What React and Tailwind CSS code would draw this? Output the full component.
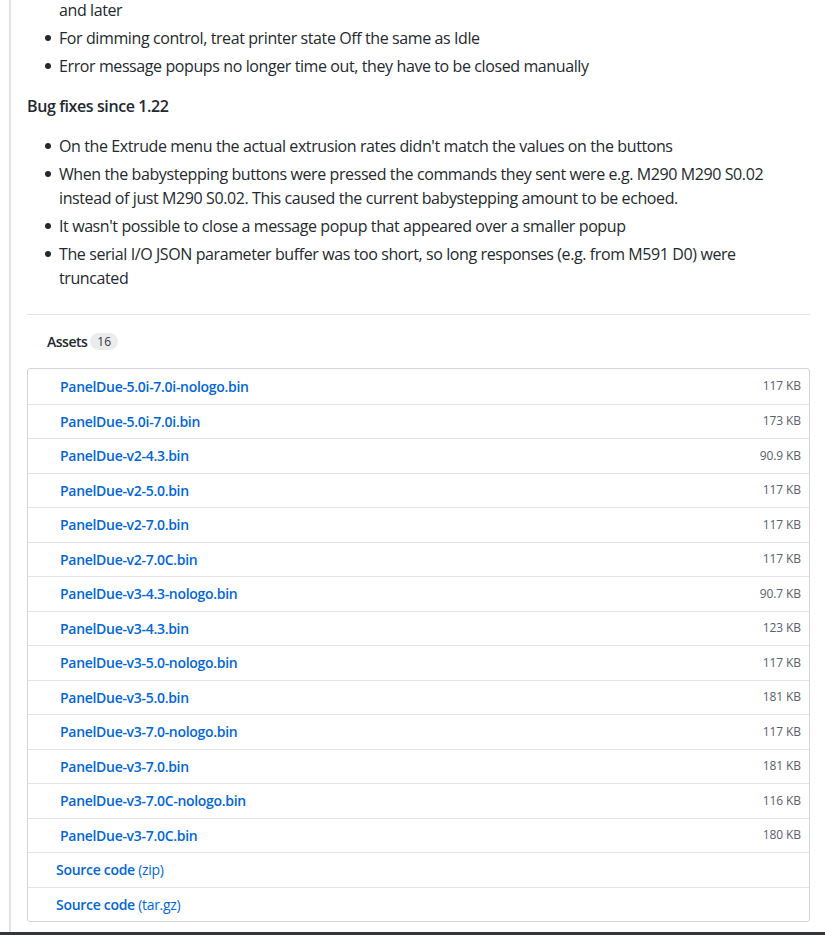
import React from "react";

const bins = [
  ["PanelDue-5.0i-7.0i-nologo.bin", "117 KB"],
  ["PanelDue-5.0i-7.0i.bin", "173 KB"],
  ["PanelDue-v2-4.3.bin", "90.9 KB"],
  ["PanelDue-v2-5.0.bin", "117 KB"],
  ["PanelDue-v2-7.0.bin", "117 KB"],
  ["PanelDue-v2-7.0C.bin", "117 KB"],
  ["PanelDue-v3-4.3-nologo.bin", "90.7 KB"],
  ["PanelDue-v3-4.3.bin", "123 KB"],
  ["PanelDue-v3-5.0-nologo.bin", "117 KB"],
  ["PanelDue-v3-5.0.bin", "181 KB"],
  ["PanelDue-v3-7.0-nologo.bin", "117 KB"],
  ["PanelDue-v3-7.0.bin", "181 KB"],
  ["PanelDue-v3-7.0C-nologo.bin", "116 KB"],
  ["PanelDue-v3-7.0C.bin", "180 KB"],
];

function Li({ children, first }) {
  return (
    <li className={`relative leading-[24px] ${first ? "" : "mt-[4px]"}`}>
      <span className="absolute left-[-14px] top-[9px] w-[6px] h-[6px] rounded-full bg-[#24292e]" />
      {children}
    </li>
  );
}

export default function App() {
  return (
    <div
      className="w-[825px] h-[935px] flex flex-col bg-white overflow-hidden text-[#24292e] text-[16px] tracking-[-0.4px]"
      style={{ fontFamily: '"Open Sans", "Noto Sans", sans-serif' }}
    >
      <div className="flex-1 flex min-h-0">
        <div className="w-[9px]" />
        <div className="w-[2px] bg-[#e1e4e8]" />
        <div className="flex-1 pl-[16px] pr-[15px] mt-[-2px]">
          <div className="pl-[32px] leading-[24px]">and later</div>
          <ul className="pl-[32px] mb-[16px]">
            <Li>For dimming control, treat printer state Off the same as Idle</Li>
            <Li>Error message popups no longer time out, they have to be closed manually</Li>
          </ul>
          <h3 className="font-semibold leading-[24px] mb-[16px]">Bug fixes since 1.22</h3>
          <ul className="pl-[32px]">
            <Li first>On the Extrude menu the actual extrusion rates didn't match the values on the buttons</Li>
            <Li>
              When the babystepping buttons were pressed the commands they sent were e.g. M290 M290 S0.02
              <br />
              instead of just M290 S0.02. This caused the current babystepping amount to be echoed.
            </Li>
            <Li>It wasn't possible to close a message popup that appeared over a smaller popup</Li>
            <Li>
              The serial I/O JSON parameter buffer was too short, so long responses (e.g. from M591 D0) were
              <br />
              truncated
            </Li>
          </ul>
          <div className="mt-[24px] border-t border-[#e1e4e8] w-[783px]" />
          <div className="pl-[20px] pt-[15px] h-[53px] flex items-start">
            <div className="flex items-center gap-[3px] h-[22px]">
              <span className="text-[14px] font-semibold tracking-[-0.5px]">Assets</span>
              <span className="text-[12px] leading-[17px] px-[7px] rounded-full bg-[#ebeced] text-[#2f363d] tracking-normal">
                16
              </span>
            </div>
          </div>
          <div className="w-[783px] border border-[#d1d5da] rounded-[3px] overflow-hidden">
            {bins.map(([name, size], i) => (
              <div
                key={name}
                className={`h-[34.5px] flex items-center justify-between pl-[32px] pr-[8px] ${
                  i > 0 ? "border-t border-[#e1e4e8]" : ""
                }`}
              >
                <span className="text-[14px] font-semibold text-[#0366d6] tracking-[-0.3px]">{name}</span>
                <span className="text-[12px] text-[#586069] tracking-[-0.1px]">{size}</span>
              </div>
            ))}
            {["zip", "tar.gz"].map((ext) => (
              <div key={ext} className="h-[34.5px] flex items-center pl-[28px] border-t border-[#e1e4e8]">
                <span className="text-[14px] text-[#0366d6] tracking-[-0.3px]">
                  <span className="font-semibold">Source code</span> ({ext})
                </span>
              </div>
            ))}
          </div>
        </div>
      </div>
      <div className="h-[3px] bg-[#2f363d]" />
    </div>
  );
}
